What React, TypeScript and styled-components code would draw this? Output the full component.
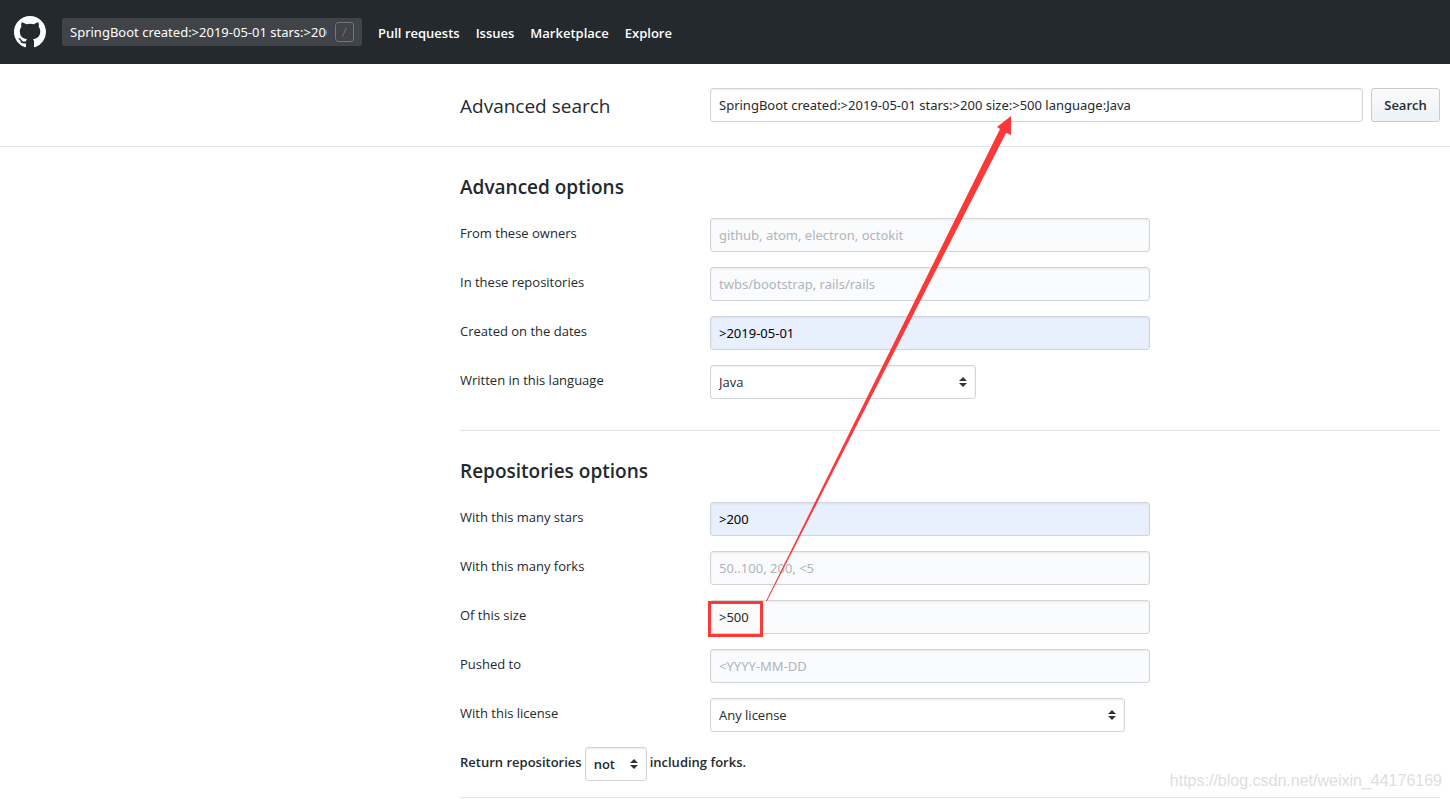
import React from 'react';
import styled, { createGlobalStyle } from 'styled-components';

const caret =
  "url(\"data:image/svg+xml,%3Csvg xmlns='http://www.w3.org/2000/svg' width='8' height='10' viewBox='0 0 8 10'%3E%3Cpath fill='%23333' d='M4 0L0 4h8zM0 6h8L4 10z'/%3E%3C/svg%3E\")";

const GlobalStyle = createGlobalStyle`
  *, *::before, *::after { box-sizing: border-box; }
  body {
    margin: 0;
    background: #fff;
    color: #24292e;
    font: 14px/21px "Open Sans", "Noto Sans", sans-serif;
  }
  input, select, button { font: inherit; color: inherit; }
`;

const Page = styled.div`
  position: relative;
  overflow: hidden;
`;

const TopBar = styled.header`
  display: flex;
  align-items: center;
  gap: 16px;
  height: 64px;
  padding: 0 14px;
  background: #24292e;
  color: #fff;
`;

const LogoLink = styled.a`
  display: block;
  height: 32px;
  color: #fff;
`;

const JumpBox = styled.label`
  display: flex;
  align-items: center;
  gap: 8px;
  width: 300px;
  height: 28px;
  padding: 0 8px;
  border-radius: 3px;
  background: #404448;
`;

const JumpInput = styled.input`
  flex: 1;
  min-width: 0;
  padding: 0;
  border: 0;
  background: none;
  color: #fff;
  font-family: "Noto Sans", sans-serif;
  font-size: 13px;
`;

const Nav = styled.nav`
  display: flex;
  gap: 16px;
  padding-top: 2px;
`;

const NavLink = styled.a`
  color: #fff;
  font-size: 13px;
  font-weight: 600;
  text-decoration: none;
`;

const SearchBar = styled.form`
  display: flex;
  height: 83px;
  padding: 24px 10px 24px 460px;
  border-bottom: 1px solid #e1e4e8;
`;

const PageTitle = styled.h1`
  flex: none;
  width: 250px;
  margin: 0;
  font-size: 19px;
  font-weight: 400;
  line-height: 36px;
`;

const TextField = styled.input<{ $tone?: 'plain' | 'filled' | 'auto' }>`
  flex: 1;
  min-width: 0;
  height: 34px;
  padding: 0 8px;
  border: 1px solid #d1d5da;
  border-radius: 3px;
  background: ${({ $tone }) => ($tone === 'plain' ? '#fff' : $tone === 'auto' ? '#e8f0fe' : '#fafbfc')};
  color: ${({ $tone }) => ($tone === 'auto' ? '#000' : '#24292e')};
  box-shadow: inset 0 1px 2px rgba(27, 31, 35, 0.075);
  font-family: "Noto Sans", sans-serif;
  font-size: 13px;
  &::placeholder { color: #b1b5b9; opacity: 1; }
`;

const SearchButton = styled.button`
  width: 69px;
  height: 34px;
  margin-left: 8px;
  padding: 0;
  border: 1px solid #c8ccd0;
  border-radius: 3px;
  background: linear-gradient(#fafbfc, #eff3f6 90%);
  font-size: 13px;
  font-weight: 600;
`;

const Options = styled.main`
  padding: 25px 10px 0 460px;
`;

const Group = styled.section`
  padding-bottom: 16px;
  border-bottom: 1px solid #e1e4e8;
  & + & { padding-top: 25px; }
`;

const GroupTitle = styled.h2`
  margin: 0 0 16px;
  font-size: 19px;
  font-weight: 600;
  line-height: 30px;
`;

const Row = styled.div`
  display: flex;
  margin-bottom: 15px;
`;

const RowLabel = styled.label`
  flex: none;
  width: 250px;
  font-size: 13px;
  line-height: 30px;
`;

const Control = styled.div`
  position: relative;
  display: flex;
  width: 440px;
`;

const Select = styled.select<{ $width: number }>`
  appearance: none;
  width: ${({ $width }) => $width}px;
  height: 34px;
  padding: 0 24px 0 8px;
  border: 1px solid #d1d5da;
  border-radius: 3px;
  background: #fff ${caret} no-repeat right 8px center;
  box-shadow: inset 0 1px 2px rgba(27, 31, 35, 0.075);
  font-size: 13px;
`;

const ForkRow = styled.div`
  display: flex;
  gap: 3px;
  font-size: 13px;
  font-weight: 600;
  line-height: 30px;
`;

const Highlight = styled.span`
  position: absolute;
  top: 1px;
  left: -2px;
  width: 55px;
  height: 36px;
  border: 3px solid #fd3838;
  pointer-events: none;
`;

const Arrow = styled.svg`
  position: absolute;
  top: 116px;
  left: 766px;
  pointer-events: none;
`;

const Watermark = styled.div`
  position: absolute;
  right: 8px;
  bottom: 7px;
  color: #dedede;
  font: 16px/20px "Liberation Sans", sans-serif;
`;

type FieldProps = {
  id: string;
  label: string;
  value?: string;
  hint?: string;
  auto?: boolean;
  marked?: boolean;
};

function Field({ id, label, value, hint, auto, marked }: FieldProps) {
  return (
    <Row>
      <RowLabel htmlFor={id}>{label}</RowLabel>
      <Control>
        <TextField id={id} type="text" defaultValue={value} placeholder={hint} $tone={auto ? 'auto' : 'filled'} />
        {marked && <Highlight />}
      </Control>
    </Row>
  );
}

export default function App() {
  return (
    <Page>
      <GlobalStyle />
      <TopBar>
        <LogoLink href="#" aria-label="Homepage">
          <svg width="32" height="32" viewBox="0 0 16 16" fill="currentColor" aria-hidden="true">
            <path
              fillRule="evenodd"
              d="M8 0C3.58 0 0 3.58 0 8c0 3.54 2.29 6.53 5.47 7.59.4.07.55-.17.55-.38 0-.19-.01-.82-.01-1.49-2.01.37-2.53-.49-2.69-.94-.09-.23-.48-.94-.82-1.13-.28-.15-.68-.52-.01-.53.63-.01 1.08.58 1.23.82.72 1.21 1.87.87 2.33.66.07-.52.28-.87.51-1.07-1.78-.2-3.64-.89-3.64-3.95 0-.87.31-1.59.82-2.15-.08-.2-.36-1.02.08-2.12 0 0 .67-.21 2.2.82.64-.18 1.32-.27 2-.27.68 0 1.36.09 2 .27 1.53-1.04 2.2-.82 2.2-.82.44 1.1.16 1.92.08 2.12.51.56.82 1.27.82 2.15 0 3.07-1.87 3.75-3.65 3.95.29.25.54.73.54 1.48 0 1.07-.01 1.93-.01 2.2 0 .21.15.46.55.38A8.013 8.013 0 0016 8c0-4.42-3.58-8-8-8z"
            />
          </svg>
        </LogoLink>
        <JumpBox>
          <JumpInput
            type="text"
            aria-label="Search or jump to"
            defaultValue="SpringBoot created:>2019-05-01 stars:>200 size:>500 language:Java"
          />
          <svg width="19" height="20" viewBox="0 0 19 20" fill="none" stroke="#74777b" aria-hidden="true">
            <rect x="0.5" y="0.5" width="18" height="19" rx="3" />
            <path d="M11.5 5.5l-4 9" />
          </svg>
        </JumpBox>
        <Nav>
          <NavLink href="#">Pull requests</NavLink>
          <NavLink href="#">Issues</NavLink>
          <NavLink href="#">Marketplace</NavLink>
          <NavLink href="#">Explore</NavLink>
        </Nav>
      </TopBar>

      <SearchBar onSubmit={(e) => e.preventDefault()}>
        <PageTitle>Advanced search</PageTitle>
        <TextField
          type="text"
          aria-label="Advanced search"
          defaultValue="SpringBoot created:>2019-05-01 stars:>200 size:>500 language:Java"
          $tone="plain"
        />
        <SearchButton type="submit">Search</SearchButton>
      </SearchBar>

      <Options>
        <Group>
          <GroupTitle>Advanced options</GroupTitle>
          <Field id="owners" label="From these owners" hint="github, atom, electron, octokit" />
          <Field id="repos" label="In these repositories" hint="twbs/bootstrap, rails/rails" />
          <Field id="created" label="Created on the dates" value=">2019-05-01" auto />
          <Row>
            <RowLabel htmlFor="language">Written in this language</RowLabel>
            <Select id="language" $width={266}>
              <option>Java</option>
            </Select>
          </Row>
        </Group>
        <Group>
          <GroupTitle>Repositories options</GroupTitle>
          <Field id="stars" label="With this many stars" value=">200" auto />
          <Field id="forks" label="With this many forks" hint="50..100, 200, <5" />
          <Field id="size" label="Of this size" value=">500" marked />
          <Field id="pushed" label="Pushed to" hint="<YYYY-MM-DD" />
          <Row>
            <RowLabel htmlFor="license">With this license</RowLabel>
            <Select id="license" $width={415}>
              <option>Any license</option>
            </Select>
          </Row>
          <ForkRow>
            <label htmlFor="include-forks">Return repositories</label>
            <Select id="include-forks" $width={62}>
              <option>not</option>
            </Select>
            <span>including forks.</span>
          </ForkRow>
        </Group>
      </Options>

      <Arrow width="248" height="486" viewBox="0 0 248 486" fill="#fd3838" aria-hidden="true">
        <path d="M245 0v19l-5-2L1 485l-1 0L234 13l-3-2z" />
      </Arrow>
      <Watermark>https://blog.csdn.net/weixin_44176169</Watermark>
    </Page>
  );
}
